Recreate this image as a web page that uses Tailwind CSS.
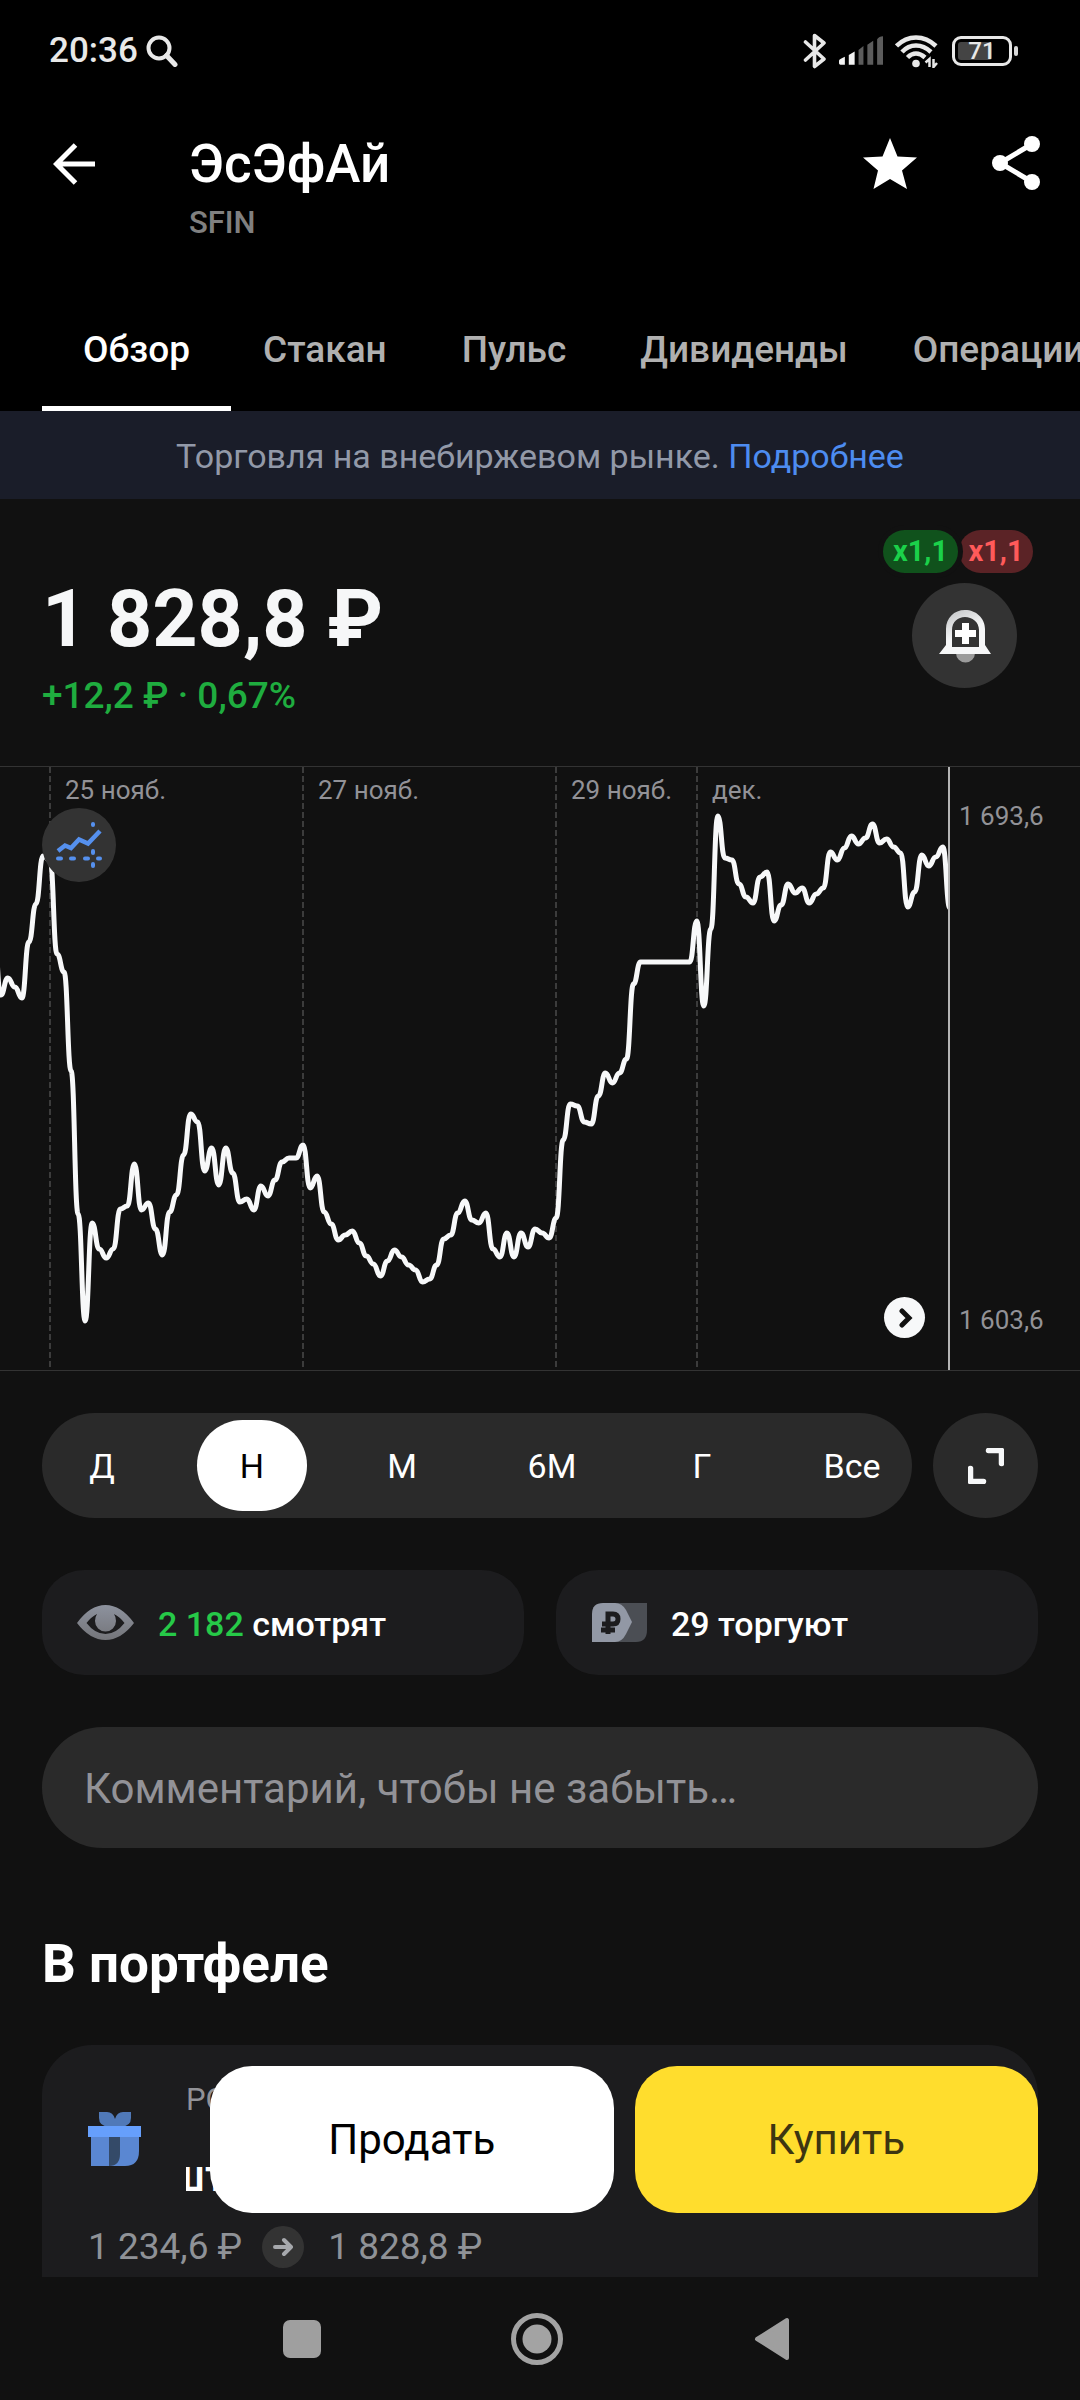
<!DOCTYPE html>
<html lang="ru">
  <head>
    <meta charset="UTF-8" />
    <meta name="viewport" content="width=device-width, initial-scale=1.0" />
    <title>ЭсЭфАй</title>
    <script src="https://cdn.jsdelivr.net/npm/@tailwindcss/browser@4"></script>
  </head>
  <body class="bg-[#111111] font-[Roboto,sans-serif] text-white overflow-x-hidden">
    <header class="bg-black">
      <!-- Статус-бар -->
      <div class="flex items-center justify-between h-[102px] pl-[49px] pr-[62px] text-[#e8e8e8]">
        <div class="flex items-center gap-2">
          <span class="text-[35px] leading-[40px] font-medium">20:36</span>
          <svg class="w-8 h-8" viewBox="0 0 32 32" fill="none" stroke="currentColor" stroke-width="4" stroke-linecap="round">
            <circle cx="13" cy="13" r="10.5" />
            <path d="M20.5 20.5L29 29.5" stroke-width="5" />
          </svg>
        </div>
        <div class="flex items-center">
          <svg class="w-[24px] h-[36px] mr-3" viewBox="0 0 24 36" fill="none" stroke="currentColor" stroke-width="3.6" stroke-linejoin="round" stroke-linecap="round">
            <path d="M2.5 9L21 26L11.500 33.500V2.500L21 10L2.500 27" />
          </svg>
          <svg class="w-[44px] h-[30px] mr-3" viewBox="0 0 45 30">
            <path fill="#f2f2f2" d="M0 25Q0 23.500 6 21V29H1.500Q0 29 0 27.500zM10 19L16 15.500V29H10z" />
            <path fill="#5c5c5c" d="M20 14L25 10V29H20zM29 8.500L35 4.500V29H29zM39 3Q41 0 45 0V29H39z" />
          </svg>
          <svg class="w-[43px] h-[33px] mr-[14px]" viewBox="0 0 43 33" fill="none" stroke="currentColor" stroke-width="4.500">
            <path d="M1.500 11Q10 2.500 21 2.500T41 11" />
            <path d="M7 17Q13 10.500 21 10.500T36 17" />
            <path d="M12.500 22.500Q16.500 18.500 21 18.500T30 22.500" />
            <circle cx="21" cy="28.500" r="3.800" fill="currentColor" stroke="none" />
            <path stroke-width="2.500" d="M34.500 32V24L30.500 27.500M38.500 24V32L42 28" />
          </svg>
          <div class="relative flex items-center justify-center w-[60px] h-[30px] rounded-[9px] border-3 border-current">
            <span class="absolute left-[3px] inset-y-[3px] w-[34px] rounded-[3px] bg-[#444444]"></span>
            <span class="relative text-[24px] leading-[24px] font-medium">71</span>
          </div>
          <span class="w-[4px] h-[10px] ml-[2px] rounded-sm bg-[#d8d8d8]"></span>
        </div>
      </div>

      <div class="flex items-start justify-between pt-8 pl-[53px] pr-10 pb-[45px]">
        <div class="flex items-start">
          <button type="button" aria-label="Назад" class="mt-[9px] mr-[94px]">
            <svg class="w-[42px] h-[42px]" viewBox="0 0 42 42" fill="none" stroke="#fff" stroke-width="5">
              <path d="M42 21H4M22.500 2L3.500 21L22.500 40" />
            </svg>
          </button>
          <div>
            <h1 class="text-[53px] leading-[60px] font-medium">ЭсЭфАй</h1>
            <p class="mt-[9px] text-[31px] leading-[40px] font-medium text-[#808080]">SFIN</p>
          </div>
        </div>
        <div class="flex items-center gap-[75px] pt-[2px]">
          <button type="button" aria-label="В избранное">
            <svg class="w-[54px] h-[54px]" viewBox="0 0 54 54" fill="#fff">
              <path d="M27 2L34.500 20.500L54 21.500L39 34.500L44 53L27 43L10.500 53L15 34.500L0 21.500L19.500 20.500z" />
            </svg>
          </button>
          <button type="button" aria-label="Поделиться">
            <svg class="w-[48px] h-[54px]" viewBox="0 0 48 54" fill="#fff">
              <path d="M40 8L8 27L40 46" fill="none" stroke="#fff" stroke-width="5" />
              <circle cx="40" cy="8" r="8" />
              <circle cx="8" cy="27" r="8" />
              <circle cx="40" cy="46" r="8" />
            </svg>
          </button>
        </div>
      </div>

      <nav class="flex h-[123px] pl-[42px] overflow-hidden text-[37px] leading-[44px] font-medium text-[#b0b0b0] whitespace-nowrap">
        <a href="#" class="flex items-center px-[41px] border-b-5 border-white pt-[5px] text-white">Обзор</a>
        <a href="#" class="flex items-center pl-8 pr-[38px]">Стакан</a>
        <a href="#" class="flex items-center px-[37px]">Пульс</a>
        <a href="#" class="flex items-center px-[37px]">Дивиденды</a>
        <a href="#" class="flex items-center pl-7">Операции</a>
      </nav>
    </header>

    <div class="flex items-center justify-center h-22 pt-[2px] bg-[#1a1d29] text-[34px] leading-[44px] text-[#9299a8]">
      <p>Торговля на внебиржевом рынке. <a href="#" class="text-[#4d8cf0]">Подробнее</a></p>
    </div>

    <main>
      <section class="flex items-start justify-between h-[267px] pl-[42px] pr-[47px]">
        <div class="pt-20">
          <p class="text-[79px] leading-[80px] font-bold text-[#f6f7f8]">1 828,8 ₽</p>
          <p class="mt-[15px] text-[37px] leading-[44px] font-medium text-[#1fad3f]">+12,2 ₽ · 0,67%</p>
        </div>
        <div class="flex flex-col items-end pt-[31px]">
          <div class="flex gap-1 text-[29px] leading-[43px] font-bold text-center">
            <span class="relative z-10 w-[75px] rounded-full bg-[#10521c] text-[#1bd14a] ring-5 ring-[#111111]">x1,1</span>
            <span class="w-[74px] -ml-[3px] rounded-full bg-[#5b2326] text-[#ff5a5a]">x1,1</span>
          </div>
          <button type="button" aria-label="Создать уведомление" class="flex items-center justify-center w-[105px] h-[105px] mt-[10px] mr-4 rounded-full bg-[#333333]">
            <svg class="w-[54px] h-[54px]" viewBox="0 0 54 54">
              <defs>
                <linearGradient id="bell" x1="0" y1="0" x2="0.6" y2="1">
                  <stop offset="0" stop-color="#b8babc" />
                  <stop offset="0.6" stop-color="#f6f7f8" />
                </linearGradient>
              </defs>
              <path d="M17 44H37A9 9 0 0 1 18 44z" fill="#9b9b9b" />
              <path fill="url(#bell)" fill-rule="evenodd" d="M27 1C38 1 47 9 47 20V36L53 45H1L8 36V20C8 9 16 1 27 1zM27 8C20 8 14 13 14 21V38H41V21C41 13 34 8 27 8z" />
              <path fill="#fff" d="M24 14H31V21H38V28H31V35H24V28H17V21H24z" />
            </svg>
          </button>
        </div>
      </section>

      <!-- График -->
      <section class="relative border-y border-[#333333]">
        <svg class="block w-full h-auto text-[26px]" viewBox="0 0 1080 603" fill="none">
          <g stroke="#3c3c3c" stroke-width="2" stroke-dasharray="6 3">
            <path d="M50 0V603M303 0V603M556 0V603M697 0V603" />
          </g>
          <g fill="#929297">
            <text x="65" y="32">25 нояб.</text>
            <text x="318" y="32">27 нояб.</text>
            <text x="571" y="32">29 нояб.</text>
            <text x="712" y="32">дек.</text>
            <text x="959" y="58">1 693,6</text>
            <text x="959" y="562">1 603,6</text>
          </g>
          <clipPath id="plot"><rect width="948" height="603" /></clipPath>
          <path id="priceLine" clip-path="url(#plot)" stroke="#f7f8f9" stroke-width="5" stroke-linecap="round" stroke-linejoin="round" />
          <path d="M949 0V603" stroke="#b4b4b4" stroke-width="2" />
        </svg>
        <button type="button" aria-label="Индикаторы" class="absolute left-[42px] top-[41px] flex items-center justify-center w-[74px] h-[74px] rounded-full bg-[#333333]">
          <svg class="w-[46px] h-[48px]" viewBox="0 0 46 48" fill="none" stroke="#5590ee" stroke-width="4.500">
            <path d="M2 30L9 24.500L15 27L23 18.500L32 22.500L44 10" />
            <path stroke-width="4" stroke-linecap="round" d="M2 37.500H5M15 37.500H18M29 37.500H32M42 37.500H44M37 3V4M37 30V32M37 43V45" />
          </svg>
        </button>
        <button type="button" aria-label="К последней цене" class="absolute right-[155px] bottom-8 flex items-center justify-center w-[41px] h-[41px] rounded-full bg-[#f7f8f9]">
          <svg class="w-5 h-5" viewBox="0 0 20 20" fill="none" stroke="#111" stroke-width="5" stroke-linecap="round">
            <path d="M7 3L14 10L7 17" />
          </svg>
        </button>
      </section>

      <div class="px-[42px]">
        <div class="flex gap-[21px] mt-[42px]">
          <div class="flex flex-1 items-center justify-between h-[105px] px-[5px] rounded-full bg-[#2a2a2a] text-[34px] leading-[44px]">
            <button type="button" class="w-[110px] h-[91px]">Д</button>
            <button type="button" class="w-[110px] h-[91px] rounded-full bg-white text-black">Н</button>
            <button type="button" class="w-[110px] h-[91px]">М</button>
            <button type="button" class="w-[110px] h-[91px]">6М</button>
            <button type="button" class="w-[110px] h-[91px]">Г</button>
            <button type="button" class="w-[110px] h-[91px]">Все</button>
          </div>
          <button type="button" aria-label="На весь экран" class="flex items-center justify-center w-[105px] h-[105px] rounded-full bg-[#2a2a2a]">
            <svg class="w-9 h-9" viewBox="0 0 36 36" fill="none" stroke="#f7f8f9" stroke-width="5.500" stroke-linecap="round" stroke-linejoin="round">
              <path d="M20.500 2.500H33.500V15.500M2.500 20.500V33.500H15.500" />
            </svg>
          </button>
        </div>

        <div class="grid grid-cols-2 gap-8 mt-[52px] text-[34px] leading-[44px] font-medium">
          <div class="flex items-center h-[105px] pl-[35px] rounded-[42px] bg-[#1c1c1e]">
            <svg class="w-[57px] h-[36px] mr-6" viewBox="0 0 57 36">
              <defs>
                <linearGradient id="eye" x1="0" y1="0" x2="0" y2="1">
                  <stop offset="0" stop-color="#8d929e" />
                  <stop offset="1" stop-color="#74757a" />
                </linearGradient>
              </defs>
              <path fill="url(#eye)" fill-rule="evenodd" d="M0 18Q13 0 28.500 0T57 18Q44 35 28.500 35T0 18zM9.500 18Q18 29 28.500 29T47.500 18Q43 12 37 9Q39 12 39 16A10.500 10.500 0 0 1 18 16Q18 12 20 9Q14 12 9.500 18z" />
            </svg>
            <p class="pt-[2px]"><span class="text-[#26c948]">2 182</span> смотрят</p>
          </div>
          <div class="flex items-center h-[105px] pl-9 rounded-[42px] bg-[#1c1c1e]">
            <svg class="w-[55px] h-[39px] mr-6" viewBox="0 0 55 39">
              <path fill="#4b4e54" d="M20 0H55V27Q55 39 44 39H20z" />
              <path fill="#9298a5" d="M0 11Q0 0 11 0H23Q30 0 34 7L40 19L34 31Q30 39 23 39H0z" />
              <path fill="none" stroke="#1c1c1e" stroke-width="5" d="M16 31V11H21Q26 11 26 16T21 21H10M9 27H23" />
            </svg>
            <p class="pt-[2px]">29 торгуют</p>
          </div>
        </div>

        <input
          type="text"
          aria-label="Комментарий"
          placeholder="Комментарий, чтобы не забыть…"
          class="block w-full h-[121px] mt-[52px] px-[42px] pt-[2px] rounded-full bg-[#2a2a2a] text-[42px] placeholder:text-[#929297]"
        />

        <h2 class="mt-[84px] text-[53px] leading-[64px] font-bold">В портфеле</h2>

        <section class="relative mt-[49px] pt-[35px] pb-[8px] px-[46px] rounded-t-[50px] bg-[#1c1c1e]">
          <div class="flex">
            <svg class="w-[54px] h-[54px] mt-8 mr-11" viewBox="0 0 54 54">
              <path fill="#5079b8" d="M11 0H19Q25 0 27 7Q29 0 35 0H43V6Q43 14 33 15H21Q11 14 11 6z" />
              <path fill="#5a87d2" d="M3 24H51V39Q51 54 37 54H3z" />
              <path fill="#344a68" d="M21 24H32V42Q32 54 21 54z" />
              <path fill="#669ffc" d="M0 14H53V25H0z" />
            </svg>
            <div class="overflow-hidden">
              <p class="text-[31px] leading-[40px] text-[#929297]">РОСТ</p>
              <p class="mt-[34px] -ml-[17px] text-[44px] leading-[44px] font-medium">шт</p>
            </div>
          </div>
          <div class="flex items-center mt-[27px] text-[37px] leading-[44px] text-[#8f9297]">
            <span>1 234,6 ₽</span>
            <span class="flex items-center justify-center w-[42px] h-[42px] mx-5 rounded-full bg-[#333333]">
              <svg class="w-5 h-5" viewBox="0 0 20 20" fill="none" stroke="#a6a8ac" stroke-width="4" stroke-linecap="round" stroke-linejoin="round">
                <path d="M2 10H18M11 3L18 10L11 17" />
              </svg>
            </span>
            <span class="ml-1">1 828,8 ₽</span>
          </div>

          <!-- Кнопки сделки поверх карточки -->
          <div class="absolute left-[168px] right-0 top-[21px] grid grid-cols-2 gap-[21px] text-[42px] leading-[50px]">
            <button type="button" class="h-[147px] rounded-[42px] bg-white text-black">Продать</button>
            <button type="button" class="h-[147px] rounded-[42px] bg-[#ffdd2d] text-[#3d3511]">Купить</button>
          </div>
        </section>
      </div>
    </main>

    <!-- Системная навигация -->
    <nav class="flex items-center justify-center gap-[155px] h-[124px] pr-[7px] bg-[#111111]">
      <button type="button" aria-label="Недавние" class="flex justify-center w-20">
        <span class="w-[38px] h-[38px] rounded-[7px] bg-[#9f9f9f]"></span>
      </button>
      <button type="button" aria-label="Домой" class="flex justify-center w-20">
        <svg class="w-[52px] h-[52px]" viewBox="0 0 52 52">
          <circle cx="26" cy="26" r="23.500" fill="none" stroke="#a3a3a3" stroke-width="5" />
          <circle cx="26" cy="26" r="14.500" fill="#a3a3a3" />
        </svg>
      </button>
      <button type="button" aria-label="Назад в системе" class="flex justify-center w-20">
        <svg class="w-9 h-[44px]" viewBox="0 0 36 44">
          <path d="M33 3V41L3 22z" fill="#9f9f9f" stroke="#9f9f9f" stroke-width="4" stroke-linejoin="round" />
        </svg>
      </button>
    </nav>

    <script>
      // Точки графика, высота линии с постоянным шагом по времени
      const points = [
        164, 228, 211, 220, 231, 175, 137, 89, 93, 187, 205, 304, 447, 554, 456,
        482, 491, 482, 442, 439, 397, 443, 436, 462, 488, 445, 428, 388, 347,
        355, 404, 381, 418, 381, 406, 435, 432, 443, 419, 429, 413, 395, 391,
        391, 378, 421, 409, 445, 457, 473, 468, 464, 476, 489, 497, 509, 494,
        483, 490, 498, 503, 515, 512, 498, 472, 468, 446, 434, 453, 456, 446,
        482, 490, 466, 490, 466, 480, 462, 466, 471, 451, 373, 337, 339, 355,
        357, 329, 306, 316, 306, 292, 217, 195, 195, 195, 195, 195, 195, 195,
        195, 154, 239, 162, 49, 91, 93, 117, 130, 136, 110, 105, 154, 138, 117,
        126, 121, 136, 127, 121, 85, 93, 81, 69, 77, 71, 57, 76, 72, 80, 86,
        140, 125, 88, 99, 90, 80, 141,
      ];
      const step = 7.03;
      const startX = 50 - step * 8;

      let d = `M${startX} ${points[0]}`;
      for (let i = 1; i < points.length; i++) {
        const x = startX + step * i;
        const mid = x - step / 2;
        d += `C${mid} ${points[i - 1]} ${mid} ${points[i]} ${x} ${points[i]}`;
      }
      document.getElementById("priceLine").setAttribute("d", d);
    </script>
  </body>
</html>
